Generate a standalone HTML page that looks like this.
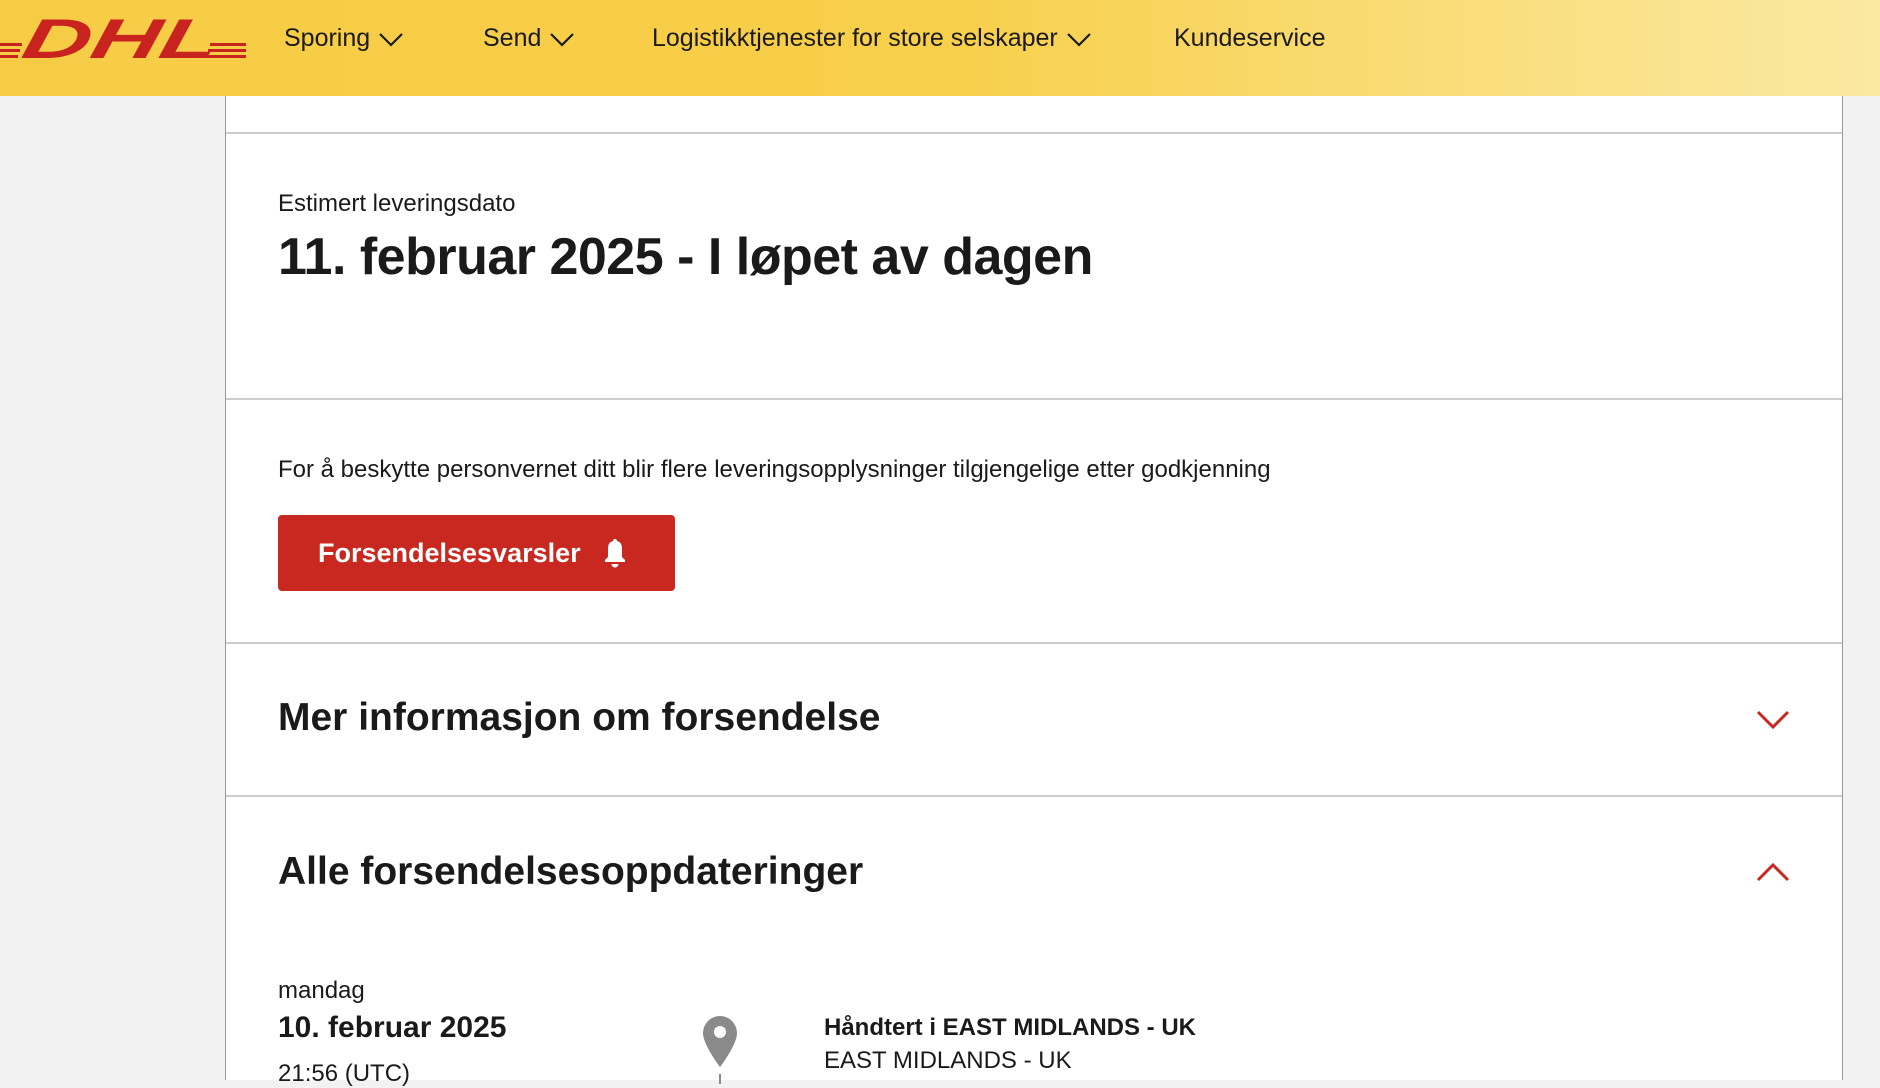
<!DOCTYPE html>
<html><head><meta charset="utf-8"><style>
*{margin:0;padding:0;box-sizing:border-box}
body{width:1880px;height:1080px;overflow:hidden;background:#f2f2f2;font-family:"Liberation Sans",sans-serif;color:#1a1a1a;position:relative}
.hdr{position:absolute;left:0;top:0;width:1880px;height:96px;background:linear-gradient(90deg,#f7cc45 0%,#f8cf4a 50%,#fbe9a2 100%);z-index:2}
.nav{position:absolute;top:24px;font-size:25px;color:#1a1a1a;white-space:nowrap}
.nav svg{vertical-align:middle;margin-left:8px}
.panel{position:absolute;left:225px;top:0;width:1618px;height:1080px;background:#fff;border-left:1px solid #999;border-right:1px solid #999}
.hr{position:absolute;left:0;width:100%;height:2px;background:#ccc}
.t{position:absolute;left:52px;white-space:nowrap}
.b{font-weight:bold}
</style></head><body>
<div class="hdr">
<svg width="250" height="96" style="position:absolute;left:0;top:0">
<g fill="#c9231f">
<text x="20" y="58" font-family="Liberation Sans" font-weight="bold" font-style="italic" font-size="56" transform="skewX(-12) translate(12,0)" textLength="195" lengthAdjust="spacingAndGlyphs">DHL</text>
<rect x="0" y="43" width="22" height="3"/><rect x="0" y="49" width="20" height="3"/><rect x="0" y="55" width="18" height="3"/>
<rect x="210" y="43" width="36" height="3"/><rect x="208" y="49" width="38" height="3"/><rect x="206" y="55" width="40" height="3"/>
</g></svg>
<div class="nav" style="left:284px">Sporing<svg width="26" height="16"><path d="M2 3l11 11 11-11" fill="none" stroke="#1a1a1a" stroke-width="2.2"/></svg></div>
<div class="nav" style="left:483px">Send<svg width="26" height="16"><path d="M2 3l11 11 11-11" fill="none" stroke="#1a1a1a" stroke-width="2.2"/></svg></div>
<div class="nav" style="left:652px">Logistikktjenester for store selskaper<svg width="26" height="16"><path d="M2 3l11 11 11-11" fill="none" stroke="#1a1a1a" stroke-width="2.2"/></svg></div>
<div class="nav" style="left:1174px">Kundeservice</div>
</div>
<div class="panel">
<div class="hr" style="top:132px"></div>
<div class="t" style="top:190px;font-size:24px">Estimert leveringsdato</div>
<div class="t b" style="top:227px;font-size:52px;letter-spacing:-0.5px">11. februar 2025 - I løpet av dagen</div>
<div class="hr" style="top:398px"></div>
<div class="t" style="top:456px;font-size:24px">For å beskytte personvernet ditt blir flere leveringsopplysninger tilgjengelige etter godkjenning</div>
<div style="position:absolute;left:52px;top:515px;width:397px;height:76px;background:#c8281f;border-radius:4px;color:#fff;font-weight:bold;font-size:27px;line-height:76px;padding-left:40px">Forsendelsesvarsler
<svg width="26" height="32" style="position:absolute;left:324px;top:22px"><path d="M13 2c-1.5 0-2 1-2 2-4 1-5 4-5 8v8l-3 3v2h20v-2l-3-3v-8c0-4-1-7-5-8 0-1-.5-2-2-2z M9.5 27h7a3.5 3.5 0 0 1-7 0z" fill="#fff"/></svg></div>
<div class="hr" style="top:642px"></div>
<div class="t b" style="top:696px;font-size:39px">Mer informasjon om forsendelse</div>
<svg width="34" height="20" style="position:absolute;left:1530px;top:709px"><path d="M2 3l15 15 15-15" fill="none" stroke="#c8281f" stroke-width="3"/></svg>
<div class="hr" style="top:795px"></div>
<div class="t b" style="top:850px;font-size:39px">Alle forsendelsesoppdateringer</div>
<svg width="34" height="20" style="position:absolute;left:1530px;top:862px"><path d="M2 18l15-15 15 15" fill="none" stroke="#c8281f" stroke-width="3"/></svg>
<div class="t" style="top:977px;font-size:24px">mandag</div>
<div class="t b" style="top:1011px;font-size:30px">10. februar 2025</div>
<div class="t" style="top:1060px;font-size:24px">21:56 (UTC)</div>
<svg width="40" height="70" style="position:absolute;left:475px;top:1016px"><path d="M19 0a17 17 0 0 0-17 17c0 12 17 34 17 34s17-22 17-34a17 17 0 0 0-17-17z" fill="#8a8a8a"/><circle cx="19" cy="16" r="6" fill="#fff"/><rect x="18" y="58" width="2" height="10" fill="#8a8a8a"/></svg>
<div class="t b" style="left:598px;top:1014px;font-size:24px">Håndtert i EAST MIDLANDS - UK</div>
<div class="t" style="left:598px;top:1047px;font-size:24px">EAST MIDLANDS - UK</div>
</div>
</body></html>
